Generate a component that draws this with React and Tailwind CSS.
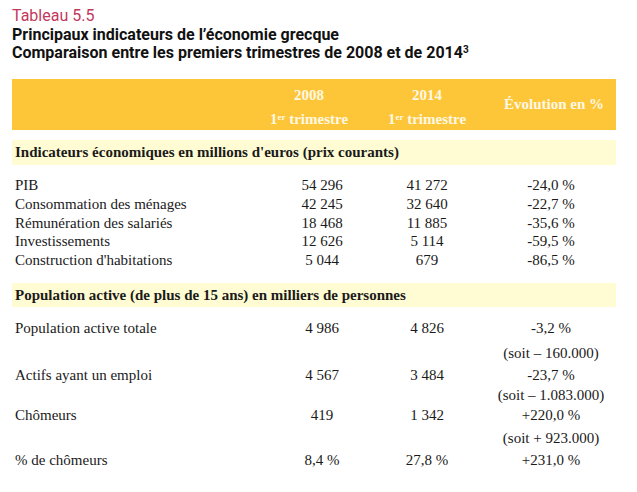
import React from "react";

const serif = { fontFamily: '"Liberation Serif", "DejaVu Serif", serif' };

const ecoRows = [
  ["PIB", "54 296", "41 272", "-24,0 %"],
  ["Consommation des ménages", "42 245", "32 640", "-22,7 %"],
  ["Rémunération des salariés", "18 468", "11 885", "-35,6 %"],
  ["Investissements", "12 626", "5 114", "-59,5 %"],
  ["Construction d'habitations", "5 044", "679", "-86,5 %"],
];

// population lines: [label, 2008, 2014, evolution, margin-top class]
const popRows = [
  ["Population active totale", "4 986", "4 826", "-3,2 %", "mt-[10px]"],
  ["", "", "", "(soit – 160.000)", "mt-[5px]"],
  ["Actifs ayant un emploi", "4 567", "3 484", "-23,7 %", "mt-[2px]"],
  ["", "", "", "(soit – 1.083.000)", "mt-0"],
  ["Chômeurs", "419", "1 342", "+220,0 %", "mt-0"],
  ["", "", "", "(soit + 923.000)", "mt-[3px]"],
  ["% de chômeurs", "8,4 %", "27,8 %", "+231,0 %", "mt-[2px]"],
];

const cols = "grid grid-cols-[250px_120px_90px_144px]";

function Row({ cells, h, extra = "" }) {
  return (
    <div className={`${cols} ${h} ${extra} items-center text-[15px] text-[#1a1a1a]`}>
      <div className="pl-[3px]">{cells[0]}</div>
      <div className="text-center">{cells[1]}</div>
      <div className="text-center">{cells[2]}</div>
      <div className="text-center pl-[14px]">{cells[3]}</div>
    </div>
  );
}

export default function App() {
  return (
    <div className="w-[637px] h-[492px] bg-white px-[12px] pt-[6px] overflow-hidden">
      <div style={{ fontFamily: 'Roboto, "Liberation Sans", sans-serif' }}>
        <div className="text-[16px] leading-[20px] text-[#c2385c]">Tableau 5.5</div>
        <div className="text-[16px] leading-[18px] font-bold text-[#111]">
          Principaux indicateurs de l’économie grecque
        </div>
        <div className="text-[16px] leading-[18px] font-bold text-[#111]">
          Comparaison entre les premiers trimestres de 2008 et de 2014
          <span className="relative -top-[5px] text-[10px]">3</span>
        </div>
      </div>

      <div style={serif} className="mt-[15px] w-[604px]">
        {/* header band */}
        <div className={`${cols} h-[51px] bg-[#fdc638] text-[#fff8e4] font-bold text-[15px] leading-[17px]`}>
          <div />
          <div className="flex flex-col items-center pt-[8px] pr-[26px] gap-[7px]">
            <span>2008</span>
            <span>
              1<sup className="text-[9px]">er</sup> trimestre
            </span>
          </div>
          <div className="flex flex-col items-center pt-[8px] gap-[7px]">
            <span>2014</span>
            <span>
              1<sup className="text-[9px]">er</sup> trimestre
            </span>
          </div>
          <div className="flex items-center justify-center pl-[20px]">Évolution en %</div>
        </div>

        <div className="mt-[10px] h-[25px] bg-[#fffcd3] flex items-center pl-[3px] font-bold text-[15px] text-[#1a1a1a]">
          Indicateurs économiques en millions d'euros (prix courants)
        </div>

        <div className="mt-[9px]">
          {ecoRows.map((r) => (
            <Row key={r[0]} cells={r} h="h-[18.75px]" />
          ))}
        </div>

        <div className="mt-[15px] h-[24px] bg-[#fffcd3] flex items-center pl-[3px] font-bold text-[15px] text-[#1a1a1a]">
          Population active (de plus de 15 ans) en milliers de personnes
        </div>

        <div>
          {popRows.map((r, i) => (
            <Row key={i} cells={r} h="h-[20px]" extra={r[4]} />
          ))}
        </div>
      </div>
    </div>
  );
}
